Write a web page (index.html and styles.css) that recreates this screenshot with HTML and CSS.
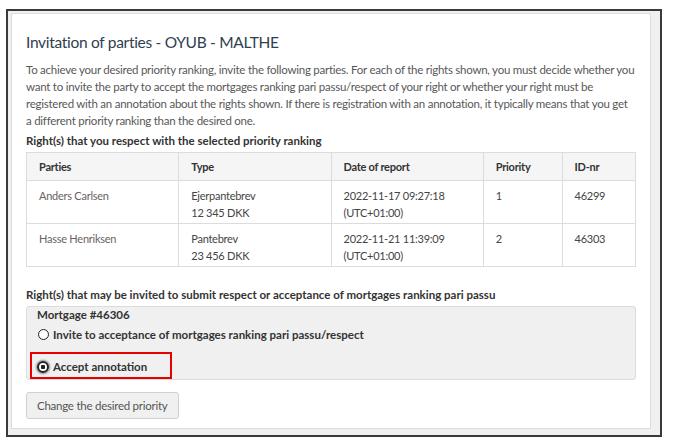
FILE: index.html
```html
<!DOCTYPE html>
<html lang="en">
  <head>
    <meta charset="UTF-8" />
    <meta name="viewport" content="width=device-width, initial-scale=1.0" />
    <title>Invitation of parties</title>
    <link rel="stylesheet" href="styles.css">
  </head>
  <body>
    <div class="frame">
      <div class="card">
        <h1 class="title">Invitation of parties - OYUB - MALTHE</h1>
        <p class="intro">
          To achieve your desired priority ranking, invite the following parties. For each of the rights shown, you must decide whether you<br>
          want to invite the party to accept the mortgages ranking pari passu/respect of your right or whether your right must be<br>
          registered with an annotation about the rights shown. If there is registration with an annotation, it typically means that you get<br>
          a different priority ranking than the desired one.
        </p>

        <h2 class="section">Right(s) that you respect with the selected priority ranking</h2>
        <table class="rights">
          <thead>
            <tr>
              <th class="col-wide">Parties</th>
              <th class="col-wide">Type</th>
              <th class="col-wide">Date of report</th>
              <th>Priority</th>
              <th>ID-nr</th>
            </tr>
          </thead>
          <tbody>
            <tr>
              <td class="party">Anders Carlsen</td>
              <td>Ejerpantebrev<br>12 345 DKK</td>
              <td>2022-11-17 09:27:18<br>(UTC+01:00)</td>
              <td>1</td>
              <td>46299</td>
            </tr>
            <tr>
              <td class="party">Hasse Henriksen</td>
              <td>Pantebrev<br>23 456 DKK</td>
              <td>2022-11-21 11:39:09<br>(UTC+01:00)</td>
              <td>2</td>
              <td>46303</td>
            </tr>
          </tbody>
        </table>

        <h2 class="section section-gap">Right(s) that may be invited to submit respect or acceptance of mortgages ranking pari passu</h2>
        <div class="mortgage">
          <div class="mortgage-title">Mortgage #46306</div>
          <label class="option">
            <span class="radio"></span>
            Invite to acceptance of mortgages ranking pari passu/respect
          </label>
          <label class="option option-marked">
            <span class="radio radio-on"></span>
            Accept annotation
          </label>
        </div>

        <button class="btn">Change the desired priority</button>
      </div>
    </div>
  </body>
</html>
```

FILE: styles.css
```css
body {
  margin: 0;
  padding: 9px 0 0 6px;
  font-family: "Lato", "Open Sans", sans-serif;
  background: #fff;
}
.frame {
  width: 640px;
  border: 2px solid #3a3a3a;
  background: #f0f0f0;
  padding: 2px 9px 6px 3px;
}
.card {
  background: #fff;
  border: 1px solid #dcdcdc;
  padding: 17px 14px 9px 14px;
}
.title {
  margin: 0;
  font-size: 15.5px;
  font-weight: 400;
  letter-spacing: -0.3px;
  color: #2f4050;
  line-height: 22px;
}
.intro {
  margin: 7.5px 0 0;
  font-size: 11.5px;
  letter-spacing: -0.25px;
  line-height: 17px;
  color: #585858;
  white-space: nowrap;
}
.section {
  margin: 3px 0 0;
  font-size: 11.5px;
  font-weight: 700;
  color: #333;
  line-height: 17px;
}
.section-gap {
  margin-top: 18.5px;
}
.rights {
  width: 100%;
  margin-top: 3.5px;
  border-collapse: collapse;
  font-size: 11px;
  letter-spacing: -0.25px;
  color: #444;
}
.rights th,
.rights td {
  border: 1px solid #dcdcdc;
  text-align: left;
  vertical-align: top;
  padding: 6px 12px 2px;
  line-height: 17px;
}
.rights th {
  background: #f5f5f5;
  font-weight: 700;
  color: #333;
  padding-top: 5px;
  padding-bottom: 5px;
}
.col-wide {
  width: 25%;
}
.party {
  color: #6b5f5f;
}
.mortgage {
  margin-top: 3.5px;
  background: #f0f0f0;
  border: 1px solid #dcdcdc;
  border-radius: 3px;
  padding: 0 10px 0 3px;
  font-size: 11.5px;
  color: #333;
}
.mortgage-title {
  font-weight: 700;
  padding-left: 7px;
  line-height: 15px;
}
.option {
  display: flex;
  align-items: center;
  gap: 4px;
  font-weight: 700;
  line-height: 17px;
  padding: 4px 8px;
}
.option-marked {
  box-sizing: border-box;
  width: 142px;
  margin-top: 5px;
  padding: 4px 5px 2px;
  border: 2px solid #e60000;
}
.radio {
  width: 9px;
  height: 9px;
  border: 1.5px solid #222;
  border-radius: 50%;
  background: #fff;
  flex: none;
}
.radio-on {
  border-width: 2px;
  width: 8px;
  height: 8px;
  background: radial-gradient(circle, #222 0 2px, #fff 2.5px);
  box-shadow: 0 0 2px 1px #888;
}
.btn {
  margin-top: 12px;
  font-family: inherit;
  font-size: 11.5px;
  letter-spacing: -0.25px;
  color: #555;
  background: #f0f0f0;
  border: 1px solid #d0d0d0;
  border-radius: 3px;
  padding: 5px 10px;
  line-height: 15px;
}
```
